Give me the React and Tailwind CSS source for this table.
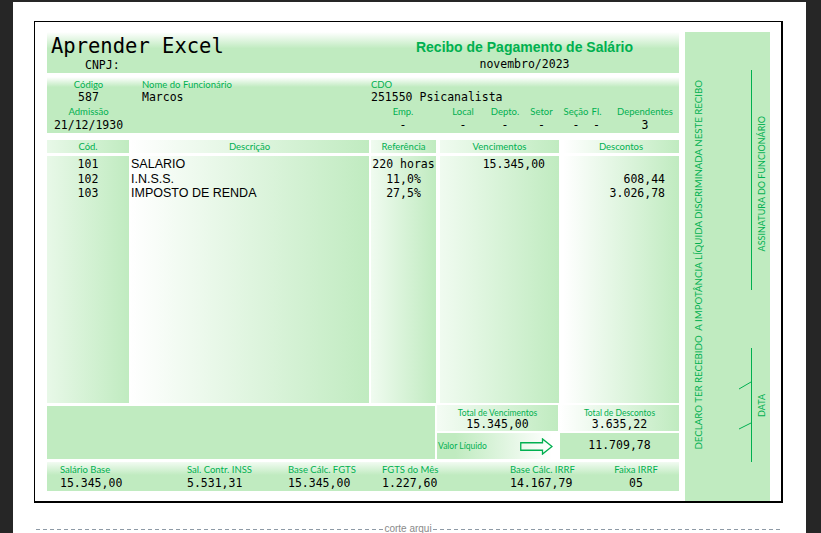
const mono = "font-['DejaVu_Sans_Mono',monospace] text-[11.5px] text-black";
const lbl = "font-['Lato',sans-serif] text-[9.5px] text-[#00b050]";
const small = "font-['Lato',sans-serif] text-[8.5px] text-[#00b050]";
const vert = "[writing-mode:vertical-rl] rotate-180 whitespace-pre font-['Lato',sans-serif] text-[#00b050]";

const empCells = [
  { w: "w-[66px]", l: "Emp.", v: "-" },
  { w: "w-[54px]", l: "Local", v: "-" },
  { w: "w-[30px]", l: "Depto.", v: "-" },
  { w: "w-[43px]", l: "Setor", v: "-" },
  { w: "w-[26px]", l: "Seção", v: "-" },
  { w: "ml-[1px] w-[13px]", l: "Fl.", v: "-" },
  { w: "ml-[9px] w-[66px]", l: "Dependentes", v: "3" },
];

const rows = [
  { c: "101", d: "SALARIO", r: "220 horas", v: "15.345,00", x: "" },
  { c: "102", d: "I.N.S.S.", r: "11,0%", v: "", x: "608,44" },
  { c: "103", d: "IMPOSTO DE RENDA", r: "27,5%", v: "", x: "3.026,78" },
];

const bottom = [
  { w: "w-[127px]", l: "Salário Base", v: "15.345,00", a: "" },
  { w: "w-[101px]", l: "Sal. Contr. INSS", v: "5.531,31", a: "" },
  { w: "w-[94px]", l: "Base Cálc. FGTS", v: "15.345,00", a: "" },
  { w: "w-[128px]", l: "FGTS do Mês", v: "1.227,60", a: "" },
  { w: "w-[96px]", l: "Base Cálc. IRRF", v: "14.167,79", a: "" },
  { w: "w-[60px]", l: "Faixa IRRF", v: "05", a: "items-center" },
];

export default function App() {
  return (
    <div className="w-[821px] h-[533px] overflow-hidden bg-[#262626] pt-[2px] pl-[13px]">
      <div className="w-[793px] h-[531px] bg-white pt-[19px] pl-[21px]">
        <div className="w-[749px] h-[482px] border-l border-t border-r-2 border-b-2 border-black pt-[10px] pl-[12px] flex gap-[6px]">
          <div className="w-[632px] flex flex-col">
            {/* header */}
            <div className="h-[41px] flex bg-[linear-gradient(to_bottom,#ffffff_0%,#c0ebc0_40%)]">
              <div className="w-[323px]">
                <div className="mt-[2px] pl-[4px] font-['DejaVu_Sans_Mono',monospace] text-[20.5px] leading-[24px] text-black">
                  Aprender Excel
                </div>
                <div className={mono + " mt-[1px] pl-[38px] leading-[13px]"}>CNPJ:</div>
              </div>
              <div className="flex-1 text-center">
                <div className="pt-[7px] font-['Liberation_Sans',Arial,sans-serif] font-bold text-[14px] leading-[16px] text-[#00b050]">
                  Recibo de Pagamento de Salário
                </div>
                <div className={mono + " mt-[3px] leading-[13px]"}>novembro/2023</div>
              </div>
            </div>

            {/* employee */}
            <div className="mt-[4px] h-[56px] flex pt-[2px] bg-[linear-gradient(to_bottom,#ffffff_0%,#c0ebc0_18%)]">
              <div className="w-[83px] flex flex-col items-center">
                <div className={lbl + " leading-[11px]"}>Código</div>
                <div className={mono + " mt-[1px] leading-[13px]"}>587</div>
                <div className={lbl + " mt-[2px] leading-[11px]"}>Admissão</div>
                <div className={mono + " mt-[2px] leading-[13px]"}>21/12/1930</div>
              </div>
              <div className="ml-[12px] w-[228px] flex flex-col">
                <div className={lbl + " leading-[11px]"}>Nome do Funcionário</div>
                <div className={mono + " mt-[1px] leading-[13px]"}>Marcos</div>
              </div>
              <div className="flex-1 flex flex-col">
                <div className={lbl + " pl-[1px] leading-[11px]"}>CDO</div>
                <div className={mono + " pl-[1px] mt-[1px] leading-[13px]"}>251550 Psicanalista</div>
                <div className="mt-[2px] flex">
                  {empCells.map((c) => (
                    <div key={c.l} className={c.w + " flex flex-col items-center"}>
                      <div className={lbl + " leading-[11px] whitespace-nowrap"}>{c.l}</div>
                      <div className={mono + " mt-[2px] leading-[13px]"}>{c.v}</div>
                    </div>
                  ))}
                </div>
              </div>
            </div>

            {/* table header */}
            <div className="mt-[7px] h-[13px] flex">
              <div className={lbl + " w-[82px] leading-[13px] text-center bg-[linear-gradient(to_right,#e8f8e8,#c0ebc0)]"}>Cód.</div>
              <div className={lbl + " ml-[1px] w-[239px] leading-[13px] text-center bg-[linear-gradient(to_right,#ffffff,#c0ebc0)]"}>Descrição</div>
              <div className={lbl + " ml-[2px] w-[65px] leading-[13px] text-center bg-[linear-gradient(to_right,#f0fbf0,#c0ebc0)]"}>Referência</div>
              <div className={lbl + " ml-[4px] w-[119px] leading-[13px] text-center bg-[linear-gradient(to_right,#f0fbf0,#c0ebc0)]"}>Vencimentos</div>
              <div className={lbl + " ml-[4px] w-[116px] leading-[13px] text-center bg-[linear-gradient(to_right,#ffffff,#c0ebc0)]"}>Descontos</div>
            </div>

            {/* table body */}
            <div className="mt-[3px] h-[247px] flex">
              <div className="w-[82px] pt-[1px] bg-[linear-gradient(to_right,#e8f8e8,#c0ebc0)]">
                {rows.map((r) => (
                  <div key={r.c} className={mono + " h-[14.5px] leading-[14.5px] text-center"}>{r.c}</div>
                ))}
              </div>
              <div className="ml-[1px] w-[239px] pt-[1px] pl-[1px] bg-[linear-gradient(to_right,#ffffff,#c0ebc0)]">
                {rows.map((r) => (
                  <div key={r.c} className="h-[14.5px] leading-[14.5px] font-['Liberation_Sans',Arial,sans-serif] text-[12.5px] text-black">{r.d}</div>
                ))}
              </div>
              <div className="ml-[2px] w-[65px] pt-[1px] bg-[linear-gradient(to_right,#f0fbf0,#c0ebc0)]">
                {rows.map((r) => (
                  <div key={r.c} className={mono + " h-[14.5px] leading-[14.5px] text-center whitespace-nowrap"}>{r.r}</div>
                ))}
              </div>
              <div className="ml-[4px] w-[119px] pt-[1px] pr-[14px] bg-[linear-gradient(to_right,#f0fbf0,#c0ebc0)]">
                {rows.map((r) => (
                  <div key={r.c} className={mono + " h-[14.5px] leading-[14.5px] text-right"}>{r.v}</div>
                ))}
              </div>
              <div className="ml-[4px] w-[116px] pt-[1px] pr-[14px] bg-[linear-gradient(to_right,#ffffff,#c0ebc0)]">
                {rows.map((r) => (
                  <div key={r.c} className={mono + " h-[14.5px] leading-[14.5px] text-right"}>{r.x}</div>
                ))}
              </div>
            </div>

            {/* totals */}
            <div className="mt-[2px] h-[54px] flex">
              <div className="w-[388px] mt-[1px] bg-[#c0ebc0]" />
              <div className="ml-[2px] flex-1 flex flex-col">
                <div className="h-[26px] flex">
                  <div className="w-[121px] pt-[3px] flex flex-col items-center bg-[linear-gradient(to_right,#f4fcf4,#c0ebc0)]">
                    <div className={small + " leading-[10px]"}>Total de Vencimentos</div>
                    <div className={mono + " leading-[13px]"}>15.345,00</div>
                  </div>
                  <div className="ml-[2px] flex-1 pt-[3px] flex flex-col items-center bg-[linear-gradient(to_right,#ffffff,#c0ebc0)]">
                    <div className={small + " leading-[10px]"}>Total de Descontos</div>
                    <div className={mono + " leading-[13px]"}>3.635,22</div>
                  </div>
                </div>
                <div className="mt-[2px] h-[26px] flex">
                  <div className="w-[121px] flex items-center bg-[linear-gradient(to_right,#c0ebc0_15%,#ffffff_95%)]">
                    <span className={small + " pl-[1px] leading-[10px]"}>Valor Líquido</span>
                    <svg className="ml-auto mr-[5px]" width="33" height="17" viewBox="0 0 33 17">
                      <path d="M0.75 4.75 H22.5 V0.9 L32 8.5 L22.5 16.1 V12.25 H0.75 Z" fill="none" stroke="#00b050" strokeWidth="1.3" strokeLinejoin="miter" />
                    </svg>
                  </div>
                  <div className={mono + " ml-[2px] flex-1 flex items-center justify-center bg-[#c0ebc0]"}>11.709,78</div>
                </div>
              </div>
            </div>

            {/* bottom row */}
            <div className="mt-[3px] h-[29px] flex pl-[13px] pt-[2px] bg-[linear-gradient(to_bottom,#f2fbf2_0%,#c0ebc0_45%)]">
              {bottom.map((b) => (
                <div key={b.l} className={b.w + " flex flex-col " + b.a}>
                  <div className={lbl + " leading-[11px] whitespace-nowrap"}>{b.l}</div>
                  <div className={mono + " mt-[2px] leading-[13px]"}>{b.v}</div>
                </div>
              ))}
            </div>
          </div>

          {/* right panel */}
          <div className="w-[85px] bg-[#c0ebc0] flex">
            <div className="w-[26px] pb-[4px] flex items-center justify-center">
              <span className={vert + " text-[9.7px] leading-[12px]"}>DECLARO TER RECEBIDO  A IMPOTÂNCIA LÍQUIDA DISCRIMINADA NESTE RECIBO</span>
            </div>
            <div className="ml-[25px] w-[34px] flex flex-col">
              <div className="mt-[38px] h-[220px] flex">
                <div className="w-[15px]" />
                <div className="w-px bg-[#00b050]" />
                <div className="flex-1 pt-[8px] flex items-center justify-center">
                  <span className={vert + " text-[9px] leading-[11px]"}>ASSINATURA DO FUNCIONÁRIO</span>
                </div>
              </div>
              <div className="mt-[58px] h-[114px] flex">
                <svg width="16" height="114" viewBox="0 0 16 114">
                  <line x1="15.5" y1="0" x2="15.5" y2="114" stroke="#00b050" strokeWidth="1" />
                  <line x1="3" y1="41" x2="15" y2="34" stroke="#00b050" strokeWidth="1" />
                  <line x1="3" y1="81" x2="15" y2="75" stroke="#00b050" strokeWidth="1" />
                </svg>
                <div className="flex-1 flex items-center justify-center">
                  <span className={vert + " text-[9px] leading-[11px]"}>DATA</span>
                </div>
              </div>
            </div>
          </div>
        </div>

        {/* corte aqui */}
        <div className="mt-[20px] w-[749px] h-[12px] flex items-center">
          <div className="flex-1 ml-[2px] h-px bg-[repeating-linear-gradient(to_right,#8e9aa6_0px,#8e9aa6_4px,transparent_4px,transparent_7px)]" />
          <span className="px-[1px] font-['Liberation_Sans',Arial,sans-serif] text-[10px] leading-[12px] text-[#8a8a8a]">corte arqui</span>
          <div className="flex-1 mr-[3px] h-px bg-[repeating-linear-gradient(to_right,#8e9aa6_0px,#8e9aa6_4px,transparent_4px,transparent_7px)]" />
        </div>
      </div>
    </div>
  );
}
